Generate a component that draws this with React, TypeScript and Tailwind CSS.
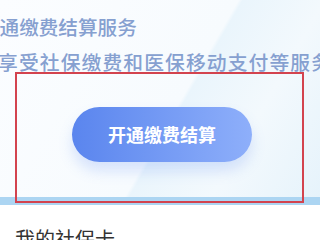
import React from "react";

export default function App() {
  return (
    <div
      className="relative w-[320px] h-[240px] overflow-hidden bg-white"
      style={{ fontFamily: '"Noto Sans CJK SC", "Noto Sans", sans-serif' }}
    >
      {/* top promo area */}
      <div className="h-[197px] pt-[10px] bg-[linear-gradient(120deg,#fbfdff_0%,#f7fbfe_55%,#eaf5fc_56%,#f3f9fd_75%,#e6f3fb_100%)]">
        <p className="ml-[-20px] whitespace-nowrap text-[19.6px] leading-[34px] font-medium text-[#86a0d0]">
          开通缴费结算服务
        </p>
        <p className="ml-[-2px] whitespace-nowrap text-[19.8px] leading-[35px] tracking-[1.1px] font-medium text-[#86a0d0]">
          享受社保缴费和医保移动支付等服务
        </p>
        <div className="mt-[28px] ml-[72px]">
          <button className="flex h-[55px] w-[180px] items-center justify-center rounded-full bg-[linear-gradient(90deg,#5a85ee,#8eaffa)] text-[18px] font-bold text-white shadow-[0_9px_14px_rgba(96,140,240,0.22)]">
            开通缴费结算
          </button>
        </div>
      </div>
      <div className="h-[8px] bg-[#acd5f2]" />
      <div className="px-[15px] pt-[22px]">
        <h2 className="text-[20px] leading-[24px] text-[#333333]">我的社保卡</h2>
      </div>

      {/* annotation box */}
      <div className="absolute left-[15px] top-[72px] h-[131px] w-[289px] border-2 border-[#d3434e]" />
    </div>
  );
}
